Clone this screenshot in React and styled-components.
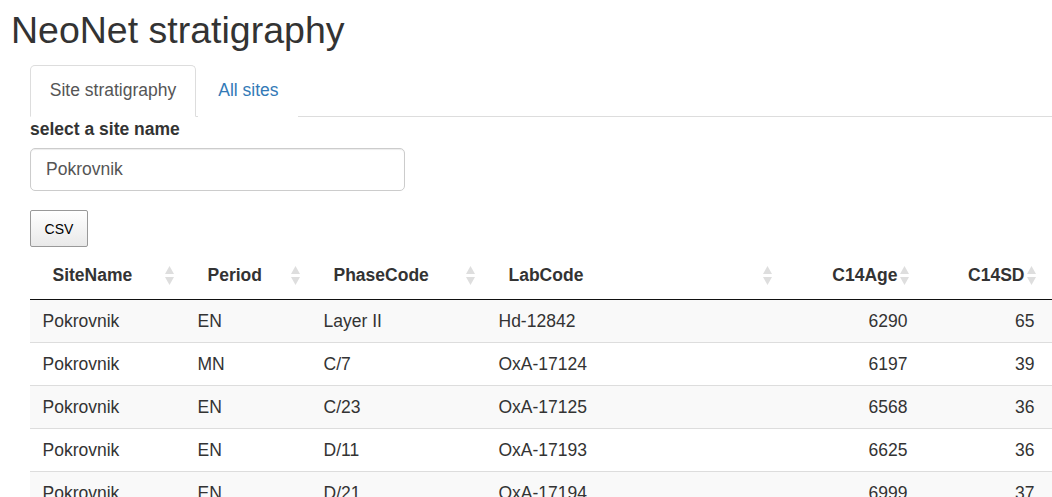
import React from 'react'
import styled, {createGlobalStyle} from 'styled-components'

const GlobalStyle = createGlobalStyle`
  html, body {
    margin: 0;
    padding: 0;
    overflow: hidden;
    background: #fff;
  }
  body {
    font-family: "Liberation Sans", Arial, Helvetica, sans-serif;
    font-size: 17.5px;
    line-height: 1.42857;
    color: #333;
  }
`;

const columns = [
  {key: 'site', label: 'SiteName', width: 155},
  {key: 'period', label: 'Period', width: 126},
  {key: 'phase', label: 'PhaseCode', width: 175},
  {key: 'lab', label: 'LabCode', width: 297},
  {key: 'age', label: 'C14Age', width: 137, right: true},
  {key: 'sd', label: 'C14SD', width: 127, right: true},
  {key: 'more', label: '', width: 160, blank: true},
]

const rows = [
  {site: 'Pokrovnik', period: 'EN', phase: 'Layer II', lab: 'Hd-12842', age: 6290, sd: 65},
  {site: 'Pokrovnik', period: 'MN', phase: 'C/7', lab: 'OxA-17124', age: 6197, sd: 39},
  {site: 'Pokrovnik', period: 'EN', phase: 'C/23', lab: 'OxA-17125', age: 6568, sd: 36},
  {site: 'Pokrovnik', period: 'EN', phase: 'D/11', lab: 'OxA-17193', age: 6625, sd: 36},
  {site: 'Pokrovnik', period: 'EN', phase: 'D/21', lab: 'OxA-17194', age: 6999, sd: 37},
]

function SortIcon() {
  return (
    <SortWrap>
      <svg width="9" height="20" viewBox="0 0 9 20">
        <polygon points="4.5,0 9,8 0,8" fill="#dedede" />
        <polygon points="0,11 9,11 4.5,19" fill="#dedede" />
      </svg>
    </SortWrap>
  )
}

export default function App() {
  return (
    <>
      <GlobalStyle />
      <Page>
        <Title>NeoNet stratigraphy</Title>
        <Main>
          <Tabs>
            <Tab active>Site stratigraphy</Tab>
            <Tab>All sites</Tab>
          </Tabs>
          <Label>select a site name</Label>
          <Input value="Pokrovnik" readOnly />
          <CsvButton>CSV</CsvButton>
          <Table>
            <colgroup>
              {columns.map(c => (
                <col key={c.key} style={{width: c.width}} />
              ))}
            </colgroup>
            <thead>
              <tr>
                {columns.map(c => (
                  <Th key={c.key} right={c.right ? 1 : 0}>
                    {c.label}
                    {!c.blank && <SortIcon />}
                  </Th>
                ))}
              </tr>
            </thead>
            <tbody>
              {rows.map((r, i) => (
                <Row key={i} odd={i % 2 === 0 ? 1 : 0}>
                  {columns.map(c => (
                    <Td key={c.key} right={c.right ? 1 : 0}>{r[c.key]}</Td>
                  ))}
                </Row>
              ))}
            </tbody>
          </Table>
        </Main>
      </Page>
    </>
  )
}

const Page = styled.div`
  padding-left: 11px;
`;
const Title = styled.h2`
  margin: 10px 0 13.75px;
  font-size: 37.5px;
  font-weight: 500;
  line-height: 1.1;
  color: #333;
`;
const Main = styled.div`
  padding-left: 19px;
  width: 1300px;
`;
const Tabs = styled.div`
  display: flex;
  border-bottom: 1px solid #ddd;
  height: 51px;
`;
const Tab = styled.div`
  margin-right: 2.5px;
  padding: 11.5px 18.75px 13.5px;
  line-height: 25px;
  height: 25px;
  border: 1px solid ${p => (p.active ? '#ddd' : 'transparent')};
  border-bottom-color: ${p => (p.active ? '#fff' : 'transparent')};
  border-radius: 5px 5px 0 0;
  background: #fff;
  color: ${p => (p.active ? '#555' : '#337ab7')};
`;
const Label = styled.div`
  font-weight: bold;
  line-height: 25px;
  margin-bottom: 6.25px;
`;
const Input = styled.input`
  display: block;
  box-sizing: border-box;
  width: 375px;
  height: 42.5px;
  padding: 7.5px 15px;
  font-family: inherit;
  font-size: 17.5px;
  color: #555;
  border: 1px solid #ccc;
  border-radius: 5px;
  box-shadow: inset 0 1px 1px rgba(0, 0, 0, 0.075);
  outline: none;
  margin-bottom: 19.5px;
`;
const CsvButton = styled.button`
  display: block;
  box-sizing: border-box;
  width: 58px;
  height: 37px;
  padding: 0;
  font-family: "Liberation Sans", Arial, sans-serif;
  font-size: 14px;
  color: #000;
  border: 1px solid #999;
  border-radius: 2px;
  background: linear-gradient(to bottom, #fff 0%, #e9e9e9 100%);
  margin-bottom: 4px;
`;
const Table = styled.table`
  table-layout: fixed;
  border-collapse: separate;
  border-spacing: 0;
  width: 1177px;
`;
const Th = styled.th`
  position: relative;
  height: 47px;
  padding: 1px 22.5px 0;
  font-weight: bold;
  text-align: ${p => (p.right ? 'right' : 'left')};
  border-bottom: 1px solid #111;
  color: #333;
  white-space: nowrap;
`;
const SortWrap = styled.span`
  position: absolute;
  right: 11px;
  top: 15px;
  line-height: 0;
`;
const Row = styled.tr`
  background: ${p => (p.odd ? '#f9f9f9' : '#fff')};
`;
const Td = styled.td`
  height: 42px;
  padding: 0 12.5px;
  text-align: ${p => (p.right ? 'right' : 'left')};
  border-bottom: 1px solid #ddd;
  white-space: nowrap;
`;
